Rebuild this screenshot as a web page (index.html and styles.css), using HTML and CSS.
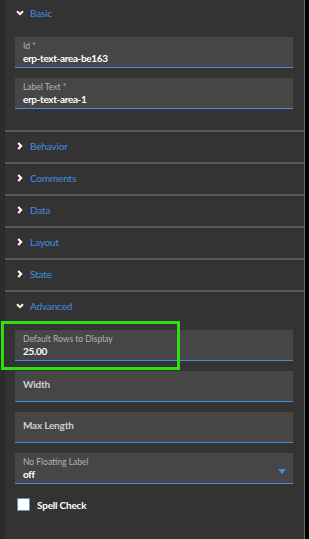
FILE: index.html
```html
<!DOCTYPE html>
<html>
<head>
<meta charset="utf-8">
<link rel="stylesheet" href="styles.css">
</head>
<body>
<div class="page">
  <div class="strip"></div>
  <div class="panel">
    <section class="sec sec-first">
      <div class="head head-first">
        <svg class="chev" width="8" height="6" viewBox="0 0 8 6"><path d="M1 1.2 L4 4.2 L7 1.2" fill="none" stroke="#fff" stroke-width="2"/></svg>
        <span class="title">Basic</span>
      </div>
      <div class="body body-first">
        <div class="field">
          <div class="lbl">Id *</div>
          <div class="val">erp-text-area-be163</div>
        </div>
        <div class="field">
          <div class="lbl">Label Text *</div>
          <div class="val">erp-text-area-1</div>
        </div>
      </div>
    </section>
    <section class="sec">
      <div class="head">
        <svg class="chev" width="8" height="8" viewBox="0 0 8 8"><path d="M2.2 1 L5.2 4 L2.2 7" fill="none" stroke="#fff" stroke-width="2"/></svg>
        <span class="title">Behavior</span>
      </div>
    </section>
    <section class="sec">
      <div class="head">
        <svg class="chev" width="8" height="8" viewBox="0 0 8 8"><path d="M2.2 1 L5.2 4 L2.2 7" fill="none" stroke="#fff" stroke-width="2"/></svg>
        <span class="title">Comments</span>
      </div>
    </section>
    <section class="sec">
      <div class="head">
        <svg class="chev" width="8" height="8" viewBox="0 0 8 8"><path d="M2.2 1 L5.2 4 L2.2 7" fill="none" stroke="#fff" stroke-width="2"/></svg>
        <span class="title">Data</span>
      </div>
    </section>
    <section class="sec">
      <div class="head">
        <svg class="chev" width="8" height="8" viewBox="0 0 8 8"><path d="M2.2 1 L5.2 4 L2.2 7" fill="none" stroke="#fff" stroke-width="2"/></svg>
        <span class="title">Layout</span>
      </div>
    </section>
    <section class="sec">
      <div class="head">
        <svg class="chev" width="8" height="8" viewBox="0 0 8 8"><path d="M2.2 1 L5.2 4 L2.2 7" fill="none" stroke="#fff" stroke-width="2"/></svg>
        <span class="title">State</span>
      </div>
    </section>
    <section class="sec">
      <div class="head">
        <svg class="chev" width="8" height="6" viewBox="0 0 8 6"><path d="M1 1.2 L4 4.2 L7 1.2" fill="none" stroke="#fff" stroke-width="2"/></svg>
        <span class="title">Advanced</span>
      </div>
      <div class="body">
        <div class="field">
          <div class="lbl">Default Rows to Display</div>
          <div class="val">25.00</div>
        </div>
        <div class="field field-empty">
          <div class="ph">Width</div>
        </div>
        <div class="field field-empty">
          <div class="ph">Max Length</div>
        </div>
        <div class="field field-select">
          <div class="sel-text">
            <div class="lbl">No Floating Label</div>
            <div class="val">off</div>
          </div>
          <svg class="caret" width="8" height="5" viewBox="0 0 8 5"><path d="M0 0 L8 0 L4 5 Z" fill="#3d8fe0"/></svg>
        </div>
        <label class="check">
          <span class="box"></span>
          <span class="check-text">Spell Check</span>
        </label>
      </div>
    </section>
  </div>
  <div class="edge"></div>
  <div class="black"></div>
  <div class="highlight"></div>
</div>
</body>
</html>
```
FILE: styles.css
```css
html, body {
  margin: 0;
  padding: 0;
  background: #000;
}
body {
  font-family: Lato, "Open Sans", sans-serif;
  width: 309px;
  height: 539px;
  overflow: hidden;
}
.page {
  position: relative;
  display: flex;
  width: 309px;
  height: 539px;
}
.strip {
  width: 5px;
  background: #2b2b2b;
}
.panel {
  width: 299px;
  background: #333333;
  display: flex;
  flex-direction: column;
}
.edge {
  width: 1px;
  background: #6a6a6a;
}
.black {
  width: 4px;
  background: #000;
}
.sec {
  border-top: 2px solid #575757;
}
.sec-first {
  border-top: none;
}
.head {
  height: 30px;
  display: flex;
  align-items: center;
  padding-left: 11px;
  padding-bottom: 2px;
  box-sizing: border-box;
  gap: 6px;
}
.head-first {
  height: 28px;
}
.chev {
  display: block;
  width: 8px;
}
.title {
  color: #3f8fe2;
  font-size: 10px;
  letter-spacing: -0.15px;
  line-height: 1;
}
.body {
  padding: 8px 11px 0 10px;
  display: flex;
  flex-direction: column;
  gap: 10px;
}
.body-first {
  padding-top: 9px;
  padding-bottom: 21px;
}
.field {
  background: #464646;
  border-bottom: 1px solid #3a8ee6;
  padding: 5px 8px 0;
  box-sizing: content-box;
  height: 25px;
}
.lbl {
  color: #b4b4b4;
  font-size: 8.5px;
  line-height: 9px;
}
.val {
  color: #fff;
  font-size: 10px;
  font-weight: 700;
  letter-spacing: -0.35px;
  line-height: 13px;
  margin-top: 1px;
}
.field-empty {
  padding-top: 7px;
  height: 23px;
}
.ph {
  color: #cfcfcf;
  font-size: 10px;
  font-weight: 700;
  letter-spacing: -0.2px;
  line-height: 13px;
}
.field-select {
  display: flex;
  justify-content: space-between;
  align-items: center;
  padding-right: 7px;
}
.sel-text {
  align-self: flex-start;
}
.caret {
  display: block;
  margin-top: 2px;
}
.check {
  display: flex;
  align-items: center;
  gap: 7px;
  margin-top: 4px;
  padding-left: 2px;
}
.box {
  width: 11px;
  height: 11px;
  background: #fff;
  border: 1px solid #5f8fc4;
}
.check-text {
  color: #fff;
  font-size: 10px;
  font-weight: 700;
  letter-spacing: -0.2px;
}
.highlight {
  position: absolute;
  left: 1px;
  top: 321px;
  width: 173px;
  height: 43px;
  border: 3px solid #2ee00f;
}
```
